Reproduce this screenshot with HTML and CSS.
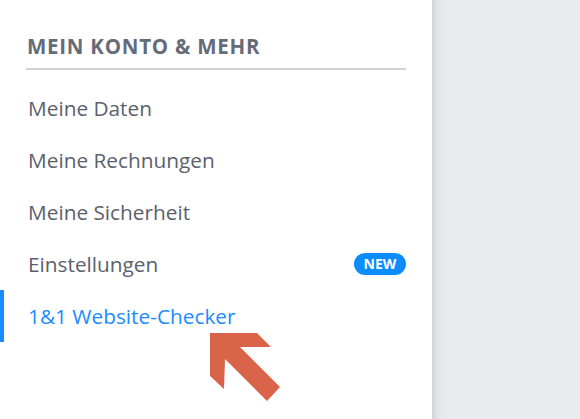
FILE: index.html
```
<!DOCTYPE html>
<html lang="de">
<head>
<meta charset="utf-8">
<link rel="stylesheet" href="styles.css">
</head>
<body>
<div class="page">
  <aside class="sidebar">
    <h2 class="heading">MEIN KONTO &amp; MEHR</h2>
    <nav class="menu">
      <a class="item">Meine Daten</a>
      <a class="item">Meine Rechnungen</a>
      <a class="item">Meine Sicherheit</a>
      <a class="item">Einstellungen <span class="badge">NEW</span></a>
      <a class="item active">1&amp;1 Website-Checker</a>
    </nav>
    <svg class="arrow" width="80" height="80" viewBox="200 325 80 80">
      <polygon points="210,333 257,333 271,347 240,347 280,387 267,401 225,359 224,389 210,376" fill="#d9644a"/>
    </svg>
  </aside>
  <main class="content"></main>
</div>
</body>
</html>
```
FILE: styles.css
```
html, body { margin: 0; padding: 0; }
body {
  font-family: "Open Sans", "Noto Sans", sans-serif;
  background: #e9ebef;
  width: 580px;
  height: 419px;
  overflow: hidden;
}
.page { display: flex; height: 419px; }
.sidebar {
  width: 432px;
  background: #fff;
  position: relative;
  box-sizing: border-box;
  padding: 0 26px;
}
.content {
  flex: 1;
  background: linear-gradient(to right, #d2d4d9 0, #e2e4e8 5px, #e9ebef 14px);
}
.heading {
  margin: 0;
  padding: 32px 0 8px 1px;
  border-bottom: 2px solid #cdd1d8;
  font-size: 20.5px;
  font-weight: 700;
  color: #646c79;
  line-height: 28px;
  letter-spacing: 0.75px;
}
.menu { display: flex; flex-direction: column; padding-top: 12px; }
.item {
  height: 52px;
  display: flex;
  align-items: center;
  justify-content: space-between;
  font-size: 20.8px;
  color: #5a616d;
  padding-left: 2px;
  position: relative;
}
.item.active { color: #1a8cff; }
.item.active::before {
  content: "";
  position: absolute;
  left: -26px;
  top: 0;
  width: 4px;
  height: 52px;
  background: #1a8cff;
}
.badge {
  background: #0b8cff;
  color: #fff;
  font-size: 14px;
  font-weight: 700;
  border-radius: 11px;
  width: 52px;
  height: 22px;
  line-height: 22px;
  text-align: center;
}
.arrow { position: absolute; left: 200px; top: 325px; }
```
